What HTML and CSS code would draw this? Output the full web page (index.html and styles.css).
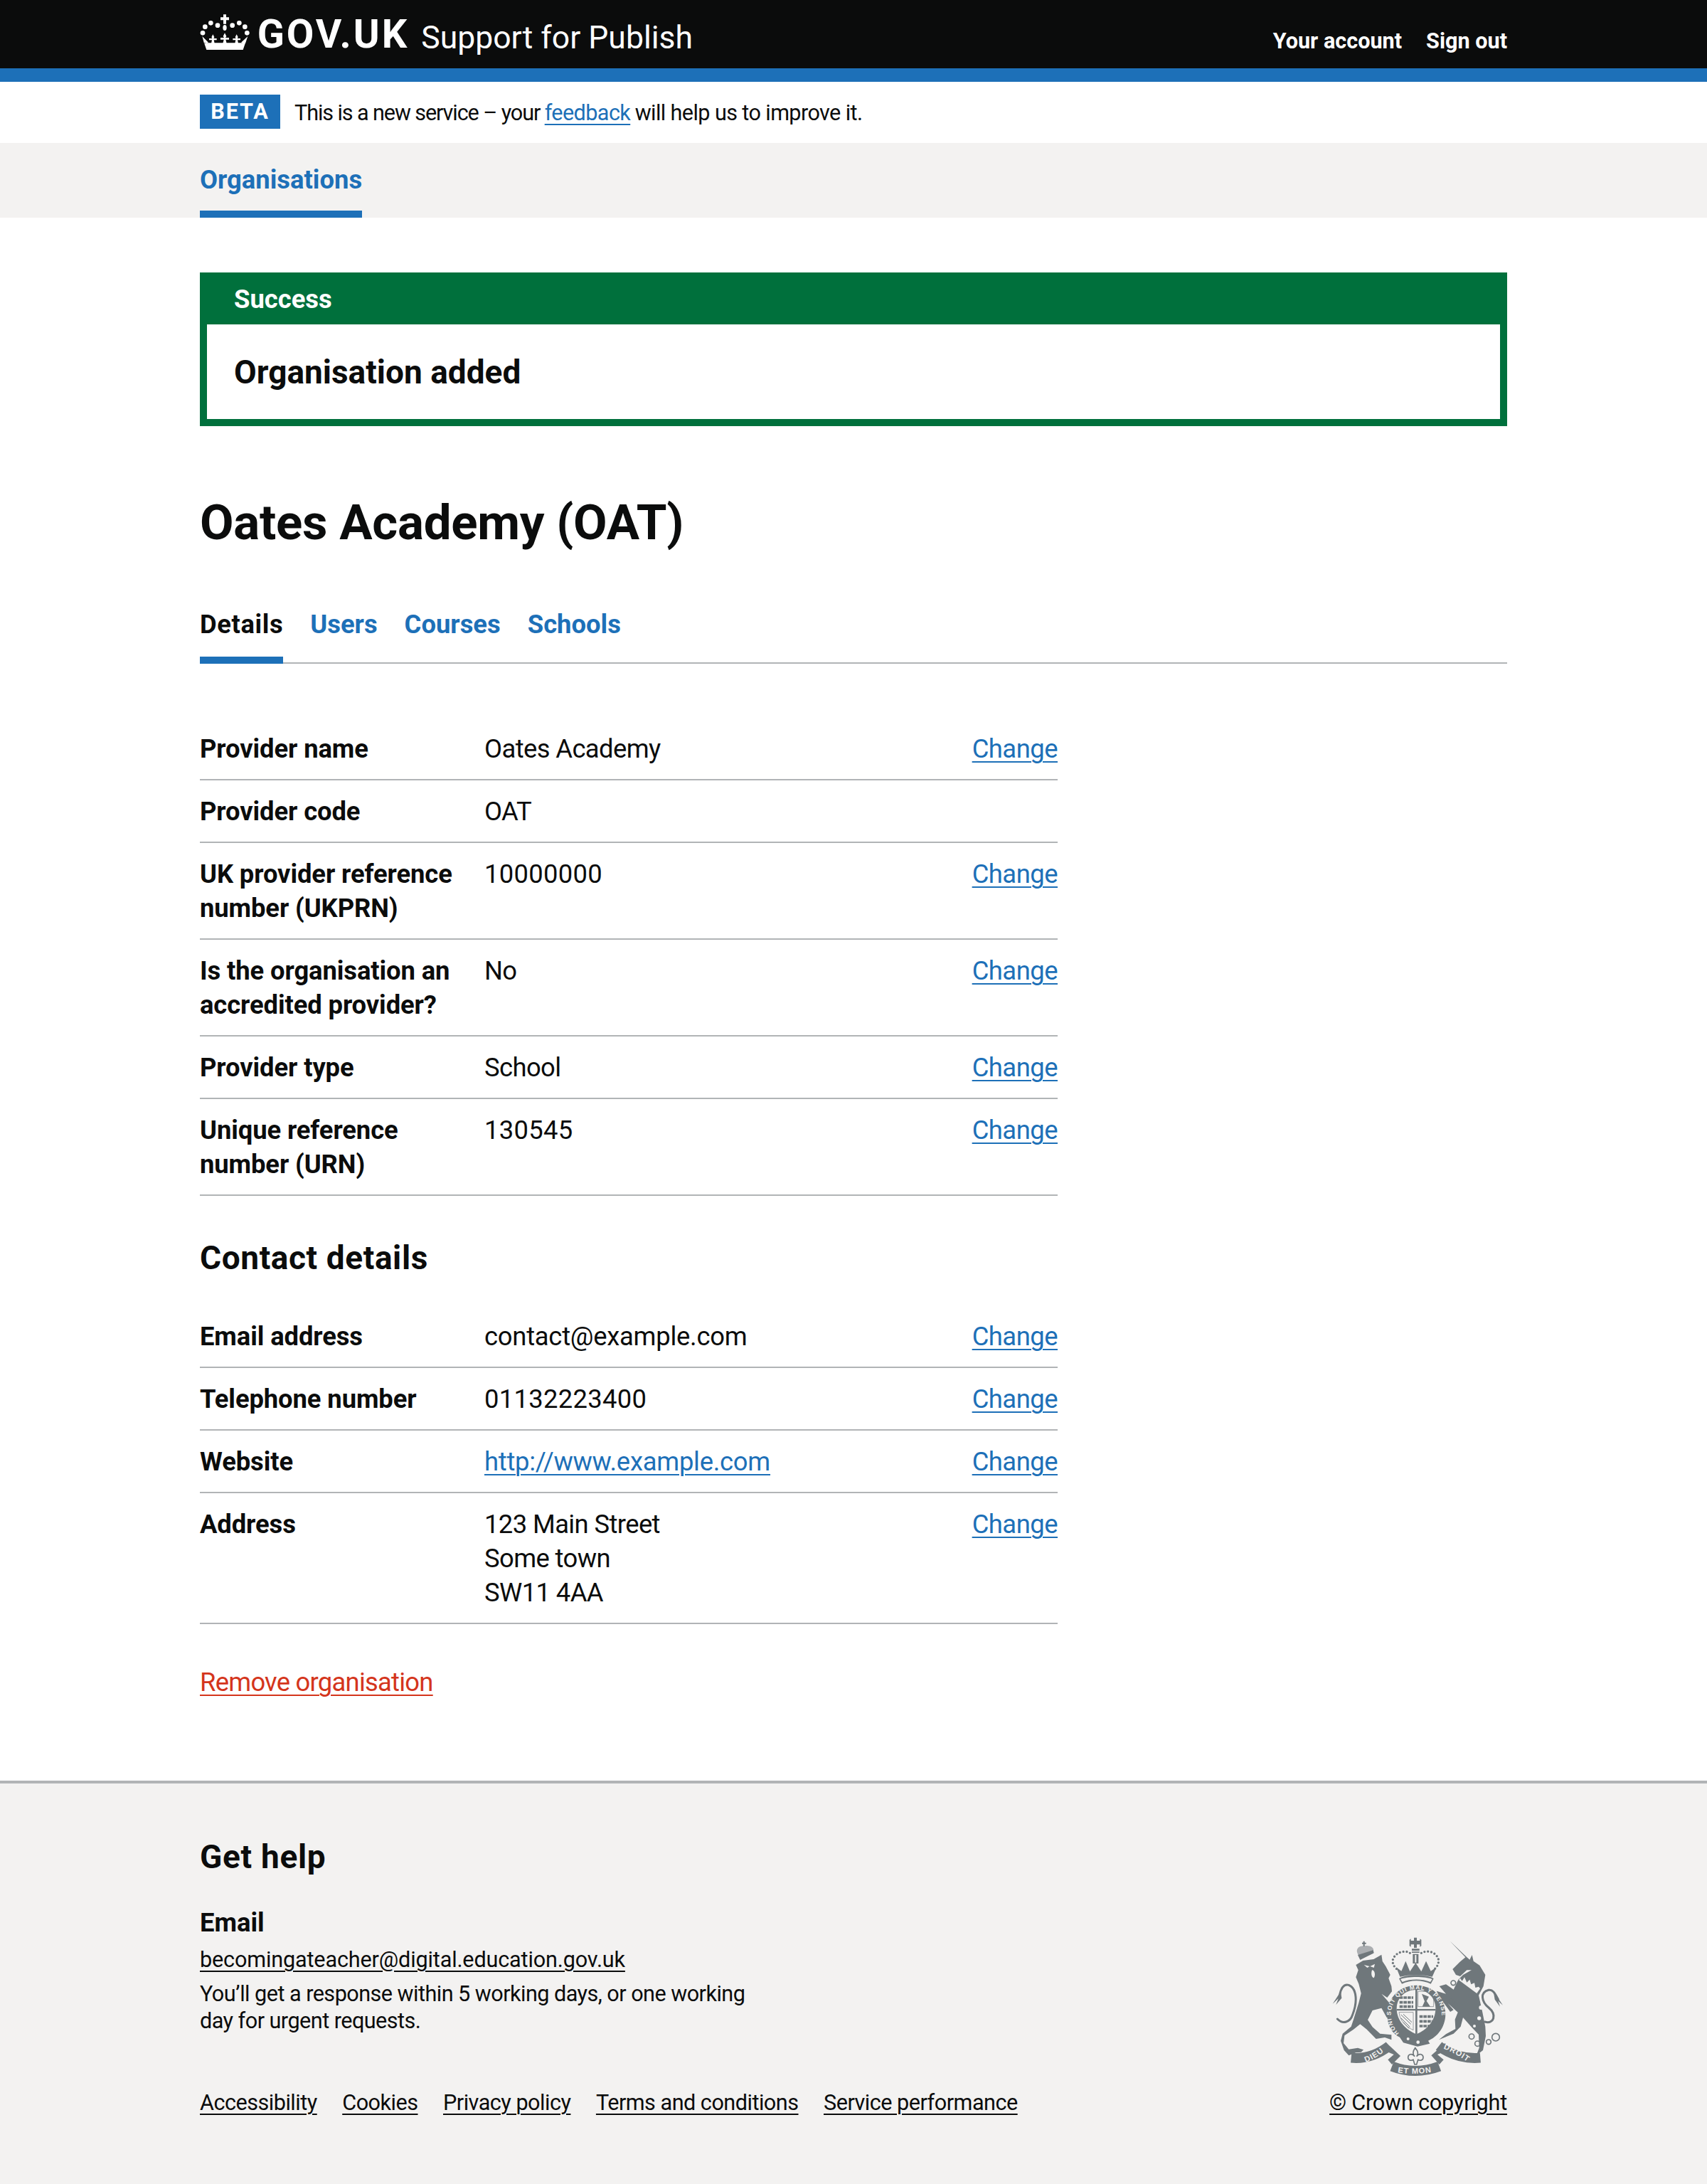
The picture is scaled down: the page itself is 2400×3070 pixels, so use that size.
FILE: index.html
```html
<!DOCTYPE html>
<html lang="en">
<head>
<meta charset="utf-8">
<title>Oates Academy (OAT) - Support for Publish</title>
<link rel="stylesheet" href="styles.css">
</head>
<body>
<header class="site-header">
  <div class="wrap header-row">
    <a class="logo" href="#">
      <svg class="crown" viewBox="30 25 215 165" aria-hidden="true">
        <g fill="#fff">
          <path d="M129 32h12v12h12v12h-12v16h-12V56h-12V44h12z"/>
          <ellipse cx="135" cy="88" rx="8" ry="12"/><circle cx="105" cy="78" r="10"/><circle cx="167" cy="78" r="10"/>
          <circle cx="76" cy="68" r="10"/><circle cx="196" cy="68" r="10"/><circle cx="52" cy="84" r="10"/><circle cx="220" cy="84" r="10"/>
          <circle cx="42" cy="110" r="10"/><circle cx="229" cy="110" r="10"/>
          <path d="M58 181H212L222 152H48ZM48 154L40 124L66 150ZM222 154L232 124L204 150Z"/>
          <path d="M135 110L142 124L138 130H153V138H139L143 154H127L131 138H117V130H132L128 124Z"/>
          <path d="M85 116L91 128L88 133H101V140H89L92 154H78L81 140H69V133H82L79 128Z"/>
          <path d="M185 116L191 128L188 133H201V140H189L192 154H178L181 140H169V133H182L179 128Z"/>
        </g>
      </svg>
      <span class="logo-text">GOV.UK</span>
    </a>
    <a class="service-name" href="#">Support for Publish</a>
    <nav class="account-nav">
      <a href="#">Your account</a>
      <a href="#">Sign out</a>
    </nav>
  </div>
</header>
<div class="header-rule"></div>

<div class="wrap phase">
  <strong class="phase-tag">BETA</strong>
  <span class="phase-text">This is a new service – your <a class="link phase-link" href="#">feedback</a> <span class="phase-tail">will help us to improve it.</span></span>
</div>

<nav class="primary-nav">
  <div class="wrap"><a class="primary-item" href="#">Organisations</a></div>
</nav>

<main class="wrap main">
  <section class="banner">
    <h2 class="banner-title">Success</h2>
    <div class="banner-body"><p class="banner-heading">Organisation added</p></div>
  </section>

  <h1 class="page-title">Oates Academy (OAT)</h1>

  <nav class="tabs">
    <a class="tab tab-current" href="#">Details</a>
    <a class="tab" href="#">Users</a>
    <a class="tab" href="#">Courses</a>
    <a class="tab" href="#">Schools</a>
  </nav>

  <dl class="summary">
    <div class="row"><dt>Provider name</dt><dd>Oates Academy</dd><dd class="action"><a class="link" href="#">Change</a></dd></div>
    <div class="row"><dt>Provider code</dt><dd>OAT</dd><dd class="action"></dd></div>
    <div class="row"><dt>UK provider reference number (UKPRN)</dt><dd class="figure">10000000</dd><dd class="action"><a class="link" href="#">Change</a></dd></div>
    <div class="row"><dt>Is the organisation an accredited provider?</dt><dd>No</dd><dd class="action"><a class="link" href="#">Change</a></dd></div>
    <div class="row"><dt>Provider type</dt><dd>School</dd><dd class="action"><a class="link" href="#">Change</a></dd></div>
    <div class="row"><dt>Unique reference number (URN)</dt><dd class="figure">130545</dd><dd class="action"><a class="link" href="#">Change</a></dd></div>
  </dl>

  <h2 class="section-title">Contact details</h2>

  <dl class="summary">
    <div class="row"><dt>Email address</dt><dd class="contact">contact@example.com</dd><dd class="action"><a class="link" href="#">Change</a></dd></div>
    <div class="row"><dt>Telephone number</dt><dd class="figure">01132223400</dd><dd class="action"><a class="link" href="#">Change</a></dd></div>
    <div class="row"><dt>Website</dt><dd class="contact"><a class="link" href="#">http://www.example.com</a></dd><dd class="action"><a class="link" href="#">Change</a></dd></div>
    <div class="row"><dt>Address</dt><dd>123 Main Street<br>Some town<br>SW11 4AA</dd><dd class="action"><a class="link" href="#">Change</a></dd></div>
  </dl>

  <p class="remove"><a class="link-danger" href="#">Remove organisation</a></p>
</main>

<footer class="footer">
  <div class="wrap footer-inner">
    <div class="footer-meta">
      <h2 class="footer-title">Get help</h2>
      <h3 class="footer-sub">Email</h3>
      <p class="footer-mail"><a href="#">becomingateacher@digital.education.gov.uk</a></p>
      <p class="footer-note">You’ll get a response within 5 working days, or one working day for urgent requests.</p>
      <ul class="footer-links">
        <li><a href="#">Accessibility</a></li>
        <li><a href="#">Cookies</a></li>
        <li><a href="#">Privacy policy</a></li>
        <li><a href="#">Terms and conditions</a></li>
        <li><a href="#">Service performance</a></li>
      </ul>
    </div>
    <div class="footer-crest">
      <svg class="arms" viewBox="340 120 725 595" aria-hidden="true">
        <defs>
          <path id="garter" d="M622 528A107 107 0 1 1 768 528"/>
          <path id="scroll-l" d="M478 652Q530 634 572 592"/>
          <path id="scroll-m" d="M608 692Q690 708 778 688"/>
          <path id="scroll-r" d="M805 592Q850 606 918 654"/>
        </defs>
        <!-- lion -->
        <path class="ink" d="M440 240L470 222L515 216L548 197L552 225L566 246L585 282L578 296L590 330L592 352L572 378L548 362L590 410L596 445L590 462L570 462L548 422L510 432L490 472L510 502L542 530L590 535L590 556L562 546L525 552L486 512L458 490L430 512L392 538L388 570L410 596L448 590L472 598L462 608L440 610L410 622L390 600L376 560L384 530L420 500L430 470L452 400L462 360L452 320L440 292L450 262Z"/>
        <path class="line" d="M362 468C385 492 416 482 426 450C446 400 446 340 410 325C386 318 376 345 372 365"/>
        <path class="ink" d="M376 352L342 404L366 382L356 408L380 380Z"/>
        <!-- lion crown -->
        <path class="ink-light" d="M446 190C438 165 462 158 478 160C494 156 518 164 514 182L512 192L458 216Z"/>
        <path class="ink" d="M466 146h5v-6h6v6h6v6h-6v10h-6v-10h-5zM448 198L513 178L516 190L458 219Z"/>
        <!-- lion face light -->
        <path class="paper" d="M474 240L498 246L488 252ZM520 236L500 246L516 252ZM508 262C520 262 524 285 516 295C508 295 502 280 508 262Z"/>
        <!-- unicorn -->
        <path class="ink" d="M836 139L905 205L920 218L930 198L936 224L962 242L986 282L978 330L958 368L974 440L986 500L988 540L976 600L948 622L960 590L958 534L930 505L892 462L882 500L852 530L790 556L820 532L860 510L858 470L870 440L828 402L852 430L838 438L796 380L780 350L820 362L792 330L820 322L852 344L872 302L892 282L928 262L908 262L880 288L862 282L848 258L878 228L902 208Z"/>
        <path class="line" d="M984 480C1022 492 1036 450 1000 420C970 395 962 356 1000 346C1020 342 1030 368 1040 385"/>
        <path class="ink" d="M1020 350L1060 410L1040 392L1048 416L1026 386Z"/>
        <path class="paper" d="M874 304L880 296L888 308L898 292L908 314L920 302L926 322L940 316L944 336L958 332L964 340L950 360Z"/>
        <circle class="paper" cx="968" cy="420" r="9"/><circle class="paper" cx="960" cy="465" r="8"/><circle class="paper" cx="940" cy="498" r="6"/>
        <g class="ring">
          <circle cx="851" cy="316" r="10"/><circle cx="841" cy="396" r="10"/>
          <circle cx="928" cy="542" r="11"/><circle cx="953" cy="572" r="11"/><circle cx="1000" cy="565" r="10"/><circle cx="1030" cy="545" r="16"/>
        </g>
        <!-- motto scroll -->
        <g class="band">
          <path d="M420 632Q505 640 580 582"/>
          <path d="M592 668Q690 706 792 668"/>
          <path d="M790 582Q865 640 965 632"/>
        </g>
        <path class="ink" d="M570 570L628 624L592 660L575 640L600 618L548 596ZM816 570L758 622L792 660L810 640L784 618L836 596Z"/>
        <!-- fleur -->
        <path class="ring" d="M690 590C678 606 680 618 688 626C676 610 660 618 660 630C660 642 672 646 682 640L688 660H696L702 640C712 646 724 642 724 630C724 618 708 610 696 626C704 618 704 606 690 590Z"/>
        <!-- garter and shield -->
        <path class="ink" d="M695 326C768 326 820 384 818 450C816 506 782 544 745 560L752 572L700 584L640 568L625 545C590 530 572 490 572 450C570 384 622 326 695 326Z"/>
        <circle class="paper" cx="660" cy="552" r="6"/><circle class="paper" cx="702" cy="566" r="7"/>
        <path class="paper" d="M695 345C742 345 776 378 776 424C776 478 736 516 695 532C654 516 612 478 612 424C612 378 648 345 695 345Z"/>
        <path class="ink" d="M691 345h8v187h-8zM612 426h164v7H612z"/>
        <g class="pattern">
          <path d="M624 378H682M624 398H682M624 416H682M708 458H766M708 478H762M708 498H752"/>
        </g>
        <path class="ink" d="M718 362L748 374L738 392L754 416H720L730 394Z"/>
        <path class="hatch" d="M630 450L672 490M640 448L676 482M630 464L668 502M640 482L664 508"/>
        <path class="line-thin" d="M702 352H768V416H702ZM622 440H682V515C650 500 625 475 622 440Z"/>
        <!-- royal crown -->
        <path class="ink" d="M622 298C650 278 740 278 768 298L756 320C720 302 670 302 634 320Z"/>
        <path class="paper" d="M628 300C660 288 730 288 762 300L754 312C720 298 670 298 636 312Z"/>
        <path class="ink" d="M626 290L610 250L632 266L650 224L668 268L692 232L716 268L736 224L756 266L780 250L762 290C720 280 668 280 626 290Z"/>
        <path class="ink" d="M685 125h12v13h13v-8l6 4v26l-6 4v-10h-13v14h-12v-14h-13v10l-6-4v-26l6-4v8h13zM676 172h32v8h-32zM676 184h32v5h-32zM680 194h24v40h-24z"/>
        <path class="paper" d="M689 198h6v32h-6z"/>
        <path class="dots" d="M668 190C648 176 606 186 596 218C592 238 606 254 618 262"/>
        <path class="dots" d="M716 190C740 176 778 184 788 216C792 238 778 254 766 262"/>
        <g class="arms-text">
          <text><textPath href="#garter">HONI SOIT QUI MAL Y PENSE</textPath></text>
          <text class="motto"><textPath href="#scroll-l" startOffset="4">DIEU</textPath></text>
          <text class="motto"><textPath href="#scroll-m" startOffset="8">ET MON</textPath></text>
          <text class="motto"><textPath href="#scroll-r" startOffset="4">DROIT</textPath></text>
        </g>
      </svg>
      <a class="crown-link" href="#">© Crown copyright</a>
    </div>
  </div>
</footer>
</body>
</html>
```
FILE: styles.css
```css
* { box-sizing: border-box; }
html, body { margin: 0; padding: 0; }
body {
  font-family: "Roboto", "Liberation Sans", sans-serif;
  font-size: 36.4px;
  line-height: 48px;
  color: #0b0c0c;
  background: #fff;
  min-height: 3070px;
  display: flex;
  flex-direction: column;
}
a { color: inherit; text-decoration-thickness: 2px; text-underline-offset: 5px; }
h1, h2, h3, p, dl, dd, dt, ul { margin: 0; padding: 0; }
.wrap { width: 1838px; margin-left: 281px; margin-right: 281px; }

.site-header { background: #0b0c0c; color: #fff; height: 96px; }
.header-row { display: flex; align-items: flex-start; height: 96px; }
.logo { display: flex; align-items: flex-start; text-decoration: none; color: #fff; }
.crown { width: 71.7px; height: 55px; margin-top: 18px; flex: none; }
.logo-text { font-weight: 700; font-size: 56px; line-height: 50px; letter-spacing: 3px; margin-left: 9px; margin-top: 23px; }
.service-name { font-size: 44.5px; line-height: 50px; margin-left: 17px; margin-top: 28px; text-decoration: none; color: #fff; }
.account-nav { margin-left: auto; display: flex; gap: 34px; margin-top: 38px; font-size: 30.6px; line-height: 40px; font-weight: 700; }
.account-nav a { text-decoration: none; color: #fff; }
.header-rule { height: 19px; background: #1d70b8; }

.phase { display: flex; align-items: center; height: 86px; font-size: 30.6px; line-height: 38px; }
.phase-tag { background: #1d70b8; color: #fff; width: 113px; height: 48px; display: flex; align-items: center; justify-content: center; font-size: 30.6px; letter-spacing: 1.9px; margin-right: 20px; margin-top: -2px; }
.phase-text { letter-spacing: -1.1px; padding-top: 1px; }
.phase-link { letter-spacing: -.6px; }
.phase-tail { letter-spacing: -.6px; }
.link { color: #1d70b8; }
.link-danger { color: #d4351c; letter-spacing: -.75px; }

.primary-nav { background: #f3f2f1; height: 105px; }
.primary-item { display: inline-block; height: 105px; padding-top: 28px; border-bottom: 10px solid #1d70b8; color: #1d70b8; font-weight: 700; text-decoration: none; }

.main { padding-top: 77px; flex: none; }
.banner { background: #00703c; border: 10px solid #00703c; height: 216px; }
.banner-title { font-size: 36.4px; line-height: 48px; font-weight: 700; color: #fff; height: 63px; padding: 4px 38px 0; }
.banner-body { background: #fff; height: 133px; padding: 37px 38px 0; }
.banner-heading { font-size: 46px; line-height: 60px; font-weight: 700; }

.page-title { font-size: 69px; line-height: 96px; font-weight: 700; letter-spacing: -.25px; margin-top: 88px; }
.tabs { display: flex; gap: 38px; margin-top: 56px; height: 94px; border-bottom: 2px solid #b1b4b6; }
.tab { display: block; height: 94px; padding-top: 15px; color: #1d70b8; font-weight: 700; text-decoration: none; }
.tab-current { color: #0b0c0c; border-bottom: 10px solid #1d70b8; letter-spacing: .6px; }

.summary { width: 1206px; }
.tabs + .summary { margin-top: 76px; }
.row { display: flex; border-bottom: 2px solid #b1b4b6; padding: 20px 0 18px; }
.row dt { width: 400px; flex: none; padding-right: 20px; font-weight: 700; letter-spacing: -.1px; }
.row dd { flex: 1; letter-spacing: -.6px; }
.row dd.figure { letter-spacing: .3px; }
.row dd.contact { letter-spacing: -.25px; }
.row .action { flex: none; width: 121px; text-align: right; letter-spacing: -.5px; }

.section-title { font-size: 46px; line-height: 60px; font-weight: 700; letter-spacing: .6px; margin-top: 57px; margin-bottom: 37px; }
.remove { margin-top: 58px; padding-bottom: 114px; }

.footer { flex: 1; background: #f3f2f1; border-top: 4px solid #b1b4b6; }
.footer-inner { display: flex; justify-content: space-between; align-items: flex-end; padding-top: 73px; padding-bottom: 73px; }
.footer-title { font-size: 46px; line-height: 60px; font-weight: 700; letter-spacing: .7px; }
.footer-sub { font-size: 36.4px; line-height: 48px; font-weight: 700; margin-top: 39px; }
.footer-mail { font-size: 30.6px; line-height: 38px; letter-spacing: -.15px; margin-top: 9px; }
.footer-note { font-size: 30.6px; line-height: 38px; letter-spacing: -.53px; width: 800px; margin-top: 10px; }
.footer-links { list-style: none; display: flex; gap: 35.5px; font-size: 30.6px; line-height: 38px; letter-spacing: -.5px; margin-top: 77px; }
.footer-crest { display: flex; flex-direction: column; align-items: flex-end; }
.arms { width: 241.7px; height: 198.3px; margin-right: 4px; margin-bottom: 17px; }
.crown-link { font-size: 30.6px; line-height: 38px; letter-spacing: -.2px; }

.ink { fill: #6f777b; }
.ink-light { fill: #6f777b; fill-opacity: .55; }
.paper { fill: #f3f2f1; }
.line { fill: none; stroke: #6f777b; stroke-width: 9; stroke-linecap: round; }
.line-thin { fill: none; stroke: #6f777b; stroke-width: 2; }
.ring { fill: none; stroke: #6f777b; stroke-width: 5; }
.band { fill: none; stroke: #6f777b; stroke-width: 42; }
.pattern { fill: none; stroke: #6f777b; stroke-width: 11; stroke-dasharray: 14 3; }
.hatch { fill: none; stroke: #6f777b; stroke-width: 3; }
.dots { fill: none; stroke: #6f777b; stroke-width: 10; stroke-linecap: round; stroke-dasharray: 0 14.5; }
.arms-text { font-family: "Liberation Sans", sans-serif; font-size: 25px; font-weight: 700; fill: #f3f2f1; letter-spacing: 3px; }
.motto { font-size: 33px; }
```
